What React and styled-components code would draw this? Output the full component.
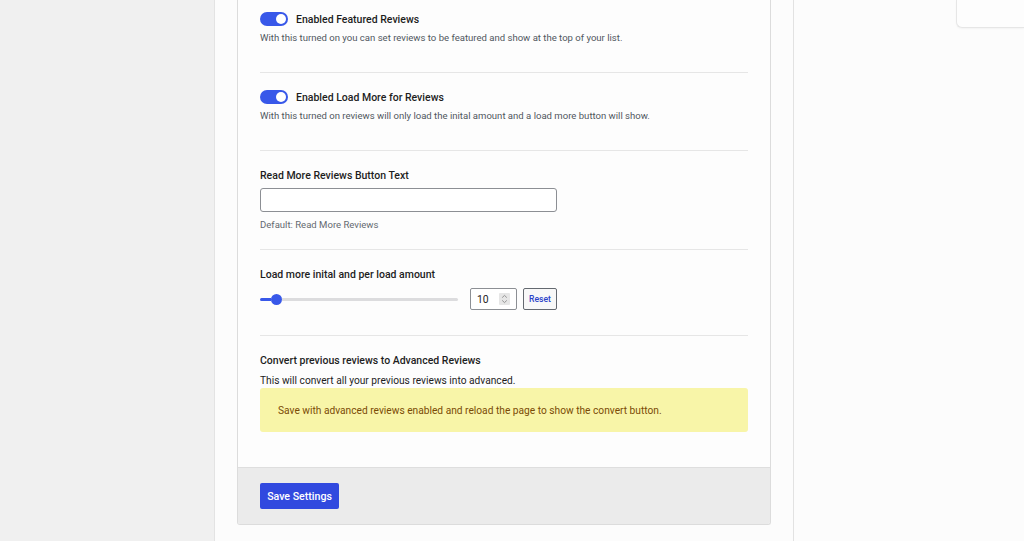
import React from "react";
import styled, { createGlobalStyle } from "styled-components";

const Global = createGlobalStyle`
  html, body { margin: 0; padding: 0; }
  body {
    background: #fcfcfc;
    font-family: Roboto, "Liberation Sans", sans-serif;
    color: #1e1e1e;
    -webkit-font-smoothing: antialiased;
  }
`;

const Page = styled.div`
  display: flex;
  width: 1024px;
  height: 541px;
  overflow: hidden;
`;

const LeftRail = styled.div`
  width: 214px;
  flex: none;
  background: #f0f0f0;
  border-right: 1px solid #e3e3e3;
`;

const MainCol = styled.main`
  width: 534px;
  flex: none;
  padding: 0 22px;
  border-right: 1px solid #e2e2e2;
  background: #fcfcfc;
`;

const SideCol = styled.aside`
  flex: 1;
  display: flex;
  justify-content: flex-end;
  align-items: flex-start;
`;

const CornerCard = styled.div`
  width: 67px;
  height: 27px;
  background: #fdfdfd;
  border: 1px solid #e6e6e6;
  border-top: none;
  border-right: none;
  border-bottom-left-radius: 6px;
  box-shadow: 0 1px 2px rgba(0, 0, 0, 0.04);
`;

const Card = styled.div`
  border: 1px solid #dcdcdc;
  border-top: none;
  border-radius: 0 0 3px 3px;
  background: #fdfdfd;
  overflow: hidden;
`;

const CardBody = styled.div`
  padding: 0 22px 35px;
`;

const Section = styled.section`
  padding: ${(p) => (p.$first ? "12px" : `${p.$top}px`)} 0 ${(p) => p.$bottom}px;
  border-bottom: ${(p) => (p.$last ? "none" : "1px solid #e6e6e6")};
`;

const ToggleRow = styled.div`
  display: flex;
  align-items: center;
  gap: 8px;
  height: 14px;
`;

const Toggle = styled.span`
  width: 28px;
  height: 14px;
  box-sizing: border-box;
  border-radius: 7px;
  background: #3858e9;
  display: flex;
  align-items: center;
  justify-content: flex-end;
  padding: 0 2px;
`;

const Knob = styled.span`
  width: 10px;
  height: 10px;
  border-radius: 50%;
  background: #fff;
`;

const Label = styled.div`
  font-size: 10.5px;
  font-weight: 500;
  line-height: 16px;
  padding-top: 1px;
  color: #1e1e1e;
`;

const Desc = styled.div`
  font-size: 9.55px;
  line-height: 14px;
  color: ${(p) => p.$color || "#50575e"};
  margin-top: ${(p) => p.$mt || 0}px;
`;

const Body = styled.div`
  font-size: 10.2px;
  line-height: 15px;
  color: #1e1e1e;
  margin-top: 4px;
`;

const TextInput = styled.input`
  display: block;
  box-sizing: border-box;
  width: 297px;
  height: 24px;
  margin-top: 4px;
  border: 1px solid #8c8f94;
  border-radius: 3px;
  background: #fff;
  outline: none;
`;

const Controls = styled.div`
  display: flex;
  align-items: center;
  height: 22px;
  margin-top: 5px;
`;

const Slider = styled.div`
  width: 198px;
  display: flex;
  align-items: center;
  margin-right: 12px;
`;

const TrackFill = styled.span`
  width: 11px;
  height: 3px;
  background: #3858e9;
  border-radius: 2px 0 0 2px;
`;

const Thumb = styled.span`
  width: 11px;
  height: 11px;
  border-radius: 50%;
  background: #3858e9;
  flex: none;
`;

const TrackRest = styled.span`
  flex: 1;
  height: 3px;
  background: #dcdcde;
  border-radius: 0 2px 2px 0;
`;

const NumberBox = styled.div`
  width: 47px;
  height: 22px;
  box-sizing: border-box;
  border: 1px solid #8c8f94;
  border-radius: 2px;
  background: #fff;
  display: flex;
  align-items: center;
  padding: 0 6px 0 6px;
  font-size: 10.4px;
  color: #1e1e1e;
  margin-right: 6px;
`;

const NumberValue = styled.span`
  flex: 1;
`;

const Spinner = styled.span`
  width: 11px;
  height: 12px;
  background: #e6e6e6;
  border-radius: 1px;
  display: flex;
  align-items: center;
  justify-content: center;
`;

const ResetButton = styled.button`
  width: 34px;
  height: 22px;
  box-sizing: border-box;
  padding: 0;
  border: 1px solid #646970;
  border-radius: 2px;
  background: #f8f8f8;
  color: #2b43c9;
  font-family: inherit;
  font-size: 8.6px;
  font-weight: 500;
`;

const Notice = styled.div`
  height: 44px;
  box-sizing: border-box;
  background: #f8f5a8;
  border-radius: 3px;
  padding: 0 18px;
  display: flex;
  align-items: center;
  font-size: 10.2px;
  color: #7a4b06;
`;

const Footer = styled.div`
  background: #ebebeb;
  border-top: 1px solid #dedede;
  padding: 15px 22px;
`;

const PrimaryButton = styled.button`
  width: 79px;
  height: 26px;
  border: none;
  border-radius: 2px;
  background: #3149df;
  color: #fff;
  font-family: inherit;
  font-size: 10.6px;
  font-weight: 500;
  padding: 0;
`;

const SpinIcon = () => (
  <svg width="7" height="10" viewBox="0 0 7 10" fill="none" stroke="#8a8a8a" strokeWidth="0.9">
    <path d="M1.2 3.6 L3.5 1.4 L5.8 3.6" />
    <path d="M1.2 6.4 L3.5 8.6 L5.8 6.4" />
  </svg>
);

function ToggleSetting({ label, desc, first }) {
  return (
    <Section $first={first} $top={17} $bottom={27}>
      <ToggleRow>
        <Toggle>
          <Knob />
        </Toggle>
        <Label>{label}</Label>
      </ToggleRow>
      <Desc $mt={5}>{desc}</Desc>
    </Section>
  );
}

export default function App() {
  return (
    <>
      <Global />
      <Page>
        <LeftRail />
        <MainCol>
          <Card>
            <CardBody>
              <ToggleSetting
                first
                label="Enabled Featured Reviews"
                desc="With this turned on you can set reviews to be featured and show at the top of your list."
              />
              <ToggleSetting
                label="Enabled Load More for Reviews"
                desc="With this turned on reviews will only load the inital amount and a load more button will show."
              />
              <Section $top={16} $bottom={17}>
                <Label>Read More Reviews Button Text</Label>
                <TextInput type="text" defaultValue="" />
                <Desc $mt={6} $color="#646970">Default: Read More Reviews</Desc>
              </Section>
              <Section $top={16} $bottom={25}>
                <Label>Load more inital and per load amount</Label>
                <Controls>
                  <Slider>
                    <TrackFill />
                    <Thumb />
                    <TrackRest />
                  </Slider>
                  <NumberBox>
                    <NumberValue>10</NumberValue>
                    <Spinner>
                      <SpinIcon />
                    </Spinner>
                  </NumberBox>
                  <ResetButton>Reset</ResetButton>
                </Controls>
              </Section>
              <Section $last $top={16} $bottom={0}>
                <Label>Convert previous reviews to Advanced Reviews</Label>
                <Body>This will convert all your previous reviews into advanced.</Body>
                <Notice>
                  Save with advanced reviews enabled and reload the page to show the convert button.
                </Notice>
              </Section>
            </CardBody>
            <Footer>
              <PrimaryButton>Save Settings</PrimaryButton>
            </Footer>
          </Card>
        </MainCol>
        <SideCol>
          <CornerCard />
        </SideCol>
      </Page>
    </>
  );
}
